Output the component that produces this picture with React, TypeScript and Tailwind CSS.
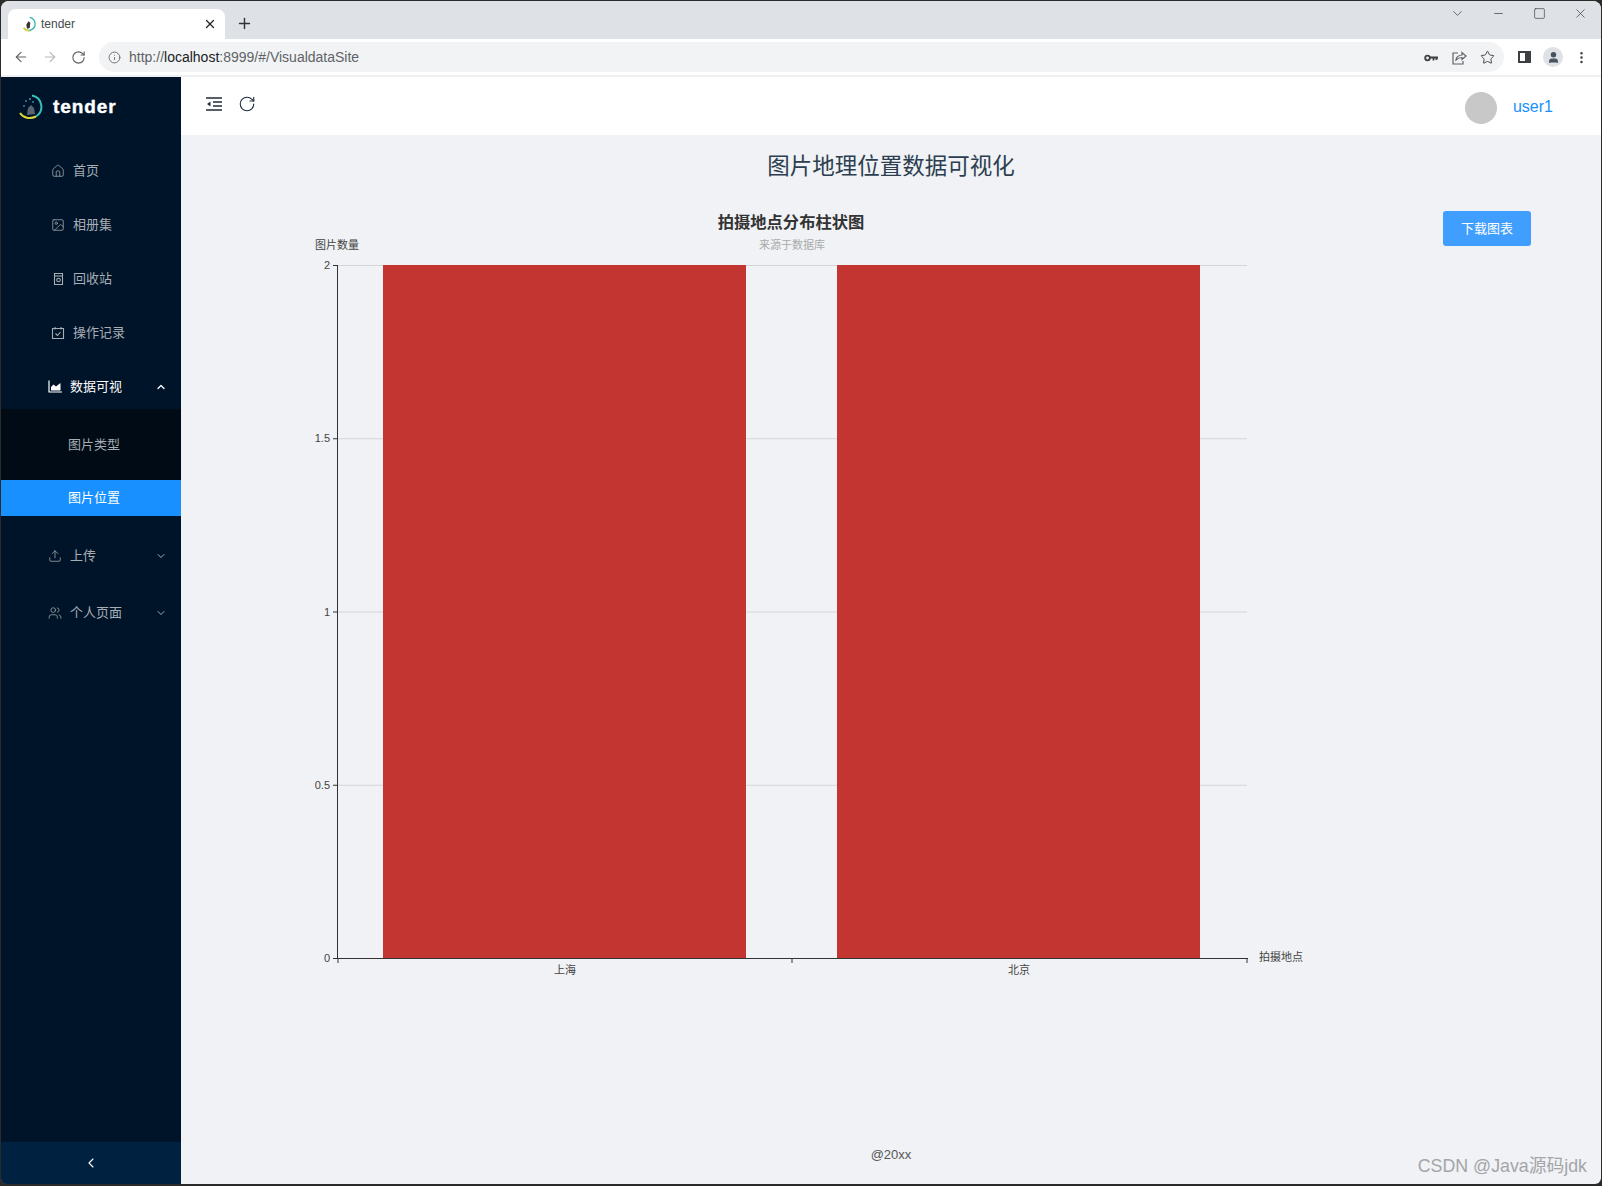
import React from 'react';
import {
  ArrowLeft, ArrowRight, RotateCw, Info, Star, Plus, X, ChevronDown, ChevronUp, ChevronLeft,
  Minus, Square, Home, Image as ImageIcon, Upload, Users, EllipsisVertical, User,
} from 'lucide-react';

const font = '[font-family:"Liberation_Sans","Noto_Sans_CJK_SC",sans-serif]';

const TabLogo = ({ size = 16 }: { size?: number }) => (
  <svg width={size} height={size} viewBox="0 0 24 24" fill="none">
    <path d="M13 2a10 10 0 0 1 2 19 10 10 0 0 1-11-3" stroke="#2fb7b0" strokeWidth="2" />
    <path d="M4 18a10 10 0 0 0 9 4" stroke="#e6d53c" strokeWidth="2.4" />
    <path d="M11 8l3 2-1 8-4 1-1-6z" fill="#333" />
  </svg>
);

const SidebarLogo = () => (
  <svg width="24" height="26" viewBox="0 0 24 26" fill="none">
    <path d="M13 1.500a11.500 11.500 0 0 1 4 21" stroke="#35c2c0" strokeWidth="2" />
    <path d="M1 19c3 5 10 6.500 16 3.500" stroke="#d8d43a" strokeWidth="2" />
    <path d="M9 14l3-3 3 3 1 6-8 1z" fill="#5a6470" />
    <circle cx="7" cy="7" r="1" fill="#3d7fa8" />
    <circle cx="11" cy="5" r="1" fill="#5c8fb0" />
    <circle cx="5" cy="12" r="1" fill="#3d7fa8" />
    <circle cx="14" cy="8" r="1" fill="#3d7fa8" />
  </svg>
);

const ShareIcon = () => (
  <svg width="16" height="16" viewBox="0 0 16 16" fill="none" stroke="#5f6368" strokeWidth="1.2">
    <path d="M7 3H2v11h10v-3" />
    <path d="M5 10c0-3 3-5 6-5V2.500L15 6l-4 3.500V7.500C8.500 7.500 6.500 8.500 5 10z" />
  </svg>
);

const KeyIcon = () => (
  <svg width="14" height="10" viewBox="0 0 14 10" fill="none" stroke="#3c4043">
    <circle cx="3.500" cy="5" r="2.300" strokeWidth="1.800" />
    <path d="M6 4.500h8M9.500 4.500v3M12.500 4.500v2.500" strokeWidth="1.800" />
  </svg>
);

const BinIcon = () => (
  <svg width="13" height="14" viewBox="0 0 13 14" fill="none" stroke="currentColor" strokeWidth="1.1">
    <path d="M2.500 1.500h8v11h-8z" />
    <path d="M2 4h9" />
    <circle cx="6.500" cy="8" r="1.800" />
  </svg>
);

const RecordIcon = () => (
  <svg width="14" height="14" viewBox="0 0 14 14" fill="none" stroke="currentColor" strokeWidth="1.1">
    <path d="M1.500 2.500h11v10h-11z" />
    <path d="M4 1v2.500M10 1v2.500" />
    <path d="M4.500 7.500l2 2 3-3.500" />
  </svg>
);

const AreaIcon = () => (
  <svg width="14" height="13" viewBox="0 0 14 13" fill="none">
    <path d="M1 .500v11.500h13" stroke="currentColor" strokeWidth="1.200" />
    <path d="M3 10.500V7l2.500-2.500L8 6.500 12.500 3v7.500z" fill="currentColor" />
  </svg>
);

const OutdentIcon = () => (
  <svg width="16" height="14" viewBox="0 0 16 14" fill="none" stroke="#1f2d3d" strokeWidth="1.3">
    <path d="M0 1h16M7 5h9M7 9h9M0 13h16" />
    <path d="M4.500 4.500L1 7l3.500 2.500z" fill="#1f2d3d" stroke="none" />
  </svg>
);

type Item = { label: string; icon: React.ReactNode; chevron?: boolean };

const topItems: Item[] = [
  { label: '首页', icon: <Home size={14} strokeWidth={1.3} /> },
  { label: '相册集', icon: <ImageIcon size={14} strokeWidth={1.3} /> },
  { label: '回收站', icon: <BinIcon /> },
  { label: '操作记录', icon: <RecordIcon /> },
];

const MenuRow = ({ label, icon }: Item) => (
  <div className="flex h-[54px] items-center pl-[50px] text-[13px] text-[#a6adb4]">
    <span className="flex w-[14px] justify-center">{icon}</span>
    <span className="ml-2">{label}</span>
  </div>
);

const SubMenuRow = ({ label, icon }: { label: string; icon: React.ReactNode }) => (
  <div className="flex h-[57px] items-center pl-[47px] pr-[14px] text-[13px] text-[#a6adb4]">
    <span className="flex w-[14px] justify-center">{icon}</span>
    <span className="ml-2 flex-1">{label}</span>
    <ChevronDown size={12} strokeWidth={2} />
  </div>
);

const Sidebar = () => (
  <aside className="flex w-[180px] shrink-0 flex-col bg-[#001429]">
    <div className="flex h-[67px] items-center pb-[7px] pl-[18px]">
      <SidebarLogo />
      <span className="ml-[10px] text-[19px] font-bold tracking-[0.9px] text-white [-webkit-text-stroke:0.4px_white]">tender</span>
    </div>
    {topItems.map((it) => (
      <MenuRow key={it.label} {...it} />
    ))}
    <div className="flex h-[49px] items-center pl-[47px] pr-[14px] pt-[4px] text-[13px] text-white">
      <span className="flex w-[14px] justify-center"><AreaIcon /></span>
      <span className="ml-2 flex-1">数据可视</span>
      <ChevronUp size={12} strokeWidth={2.5} />
    </div>
    <div className="flex h-[71px] items-center bg-[#000b16] pl-[67px] text-[13px] text-[#a6adb4]">图片类型</div>
    <div className="flex h-[36px] items-center bg-[#1890ff] pl-[67px] text-[13px] text-white">图片位置</div>
    <div className="h-[11px]" />
    <SubMenuRow label="上传" icon={<Upload size={14} strokeWidth={1.3} />} />
    <SubMenuRow label="个人页面" icon={<Users size={14} strokeWidth={1.3} />} />
    <div className="flex-1" />
    <div className="flex h-[42px] items-center justify-center bg-[#002140] text-white">
      <ChevronLeft size={16} strokeWidth={1.6} />
    </div>
  </aside>
);

const BrowserChrome = () => (
  <div className="shrink-0">
    <div className="flex h-[38px] items-end bg-[#dee1e6]">
      <div className="ml-[7px] flex h-[30px] w-[217px] items-center rounded-t-[8px] bg-white pb-px pl-[13px] pr-[8px]">
        <TabLogo />
        <span className="ml-[4px] flex-1 text-[12px] text-[#45494e]">tender</span>
        <X size={14} strokeWidth={2.2} className="text-[#222]" />
      </div>
      <div className="ml-[11px] flex h-[30px] items-center pb-[2px]">
        <Plus size={17} strokeWidth={2} className="text-[#333]" />
      </div>
      <div className="flex-1" />
      <div className="flex h-[38px] items-start pt-[5px] text-[#444]">
        <ChevronDown size={15} strokeWidth={1.2} className="mr-[27px]" />
        <Minus size={13} strokeWidth={1.4} className="mr-[28px] mt-[1px]" />
        <Square size={13} strokeWidth={1.3} className="mr-[27px] mt-[1px]" />
        <X size={15} strokeWidth={1.2} className="mr-[13px]" />
      </div>
    </div>
    <div className="flex h-[36px] items-center bg-white text-[#5f6368]">
      <ArrowLeft size={16} strokeWidth={1.7} className="ml-[12px]" />
      <ArrowRight size={16} strokeWidth={1.7} className="ml-[13px] text-[#b4b7bb]" />
      <RotateCw size={15} strokeWidth={1.8} className="ml-[13px]" />
      <div className="ml-[13px] flex h-[30px] w-[1405px] items-center rounded-full bg-[#f1f3f4] pl-[9px] pr-[9px] pt-px">
        <Info size={13} strokeWidth={1.6} />
        <span className="ml-[8px] flex-1 text-[14px] text-[#5f6368]">
          http://<span className="text-[#202124]">localhost</span>:8999/#/VisualdataSite
        </span>
        <span className="mr-[13px]"><KeyIcon /></span>
        <ShareIcon />
        <Star size={15} strokeWidth={1.5} className="ml-[13px] text-[#3c4043]" />
      </div>
      <div className="ml-[14px] h-[12px] w-[13px] border-2 border-[#3c4043] bg-[linear-gradient(90deg,white_50%,#3c4043_50%)]" />
      <div className="ml-[12px] flex h-[20px] w-[20px] items-center justify-center rounded-full bg-[#dfe1e5]">
        <User size={13} fill="#46505f" className="text-[#46505f]" />
      </div>
      <EllipsisVertical size={15} strokeWidth={2} className="ml-[11px] text-[#3c4043]" />
    </div>
    <div className="h-[2px] bg-[#eef0f2]" />
  </div>
);

const Header = () => (
  <div className="flex h-[58px] shrink-0 items-center bg-white pb-[5px] pl-[25px] pr-[48px]">
    <OutdentIcon />
    <RotateCw size={18} strokeWidth={1.5} className="ml-[16px] text-[#1f2d3d]" />
    <div className="flex-1" />
    <div className="mt-[9px] h-[32px] w-[32px] rounded-full bg-[#c8c8c8]" />
    <span className="ml-[16px] mt-[6px] text-[16px] text-[#1890ff]">user1</span>
  </div>
);

// 坐标系: svg 左上角对应页面 (300, 205)
const BarChart = () => {
  const x0 = 38;
  const x1 = 947;
  const top = 60;
  const bottom = 753;
  const ticks = ['2', '1.5', '1', '0.5', '0'];
  return (
    <svg width="1020" height="785" viewBox="0 0 1020 785" className="shrink-0">
      {ticks.slice(0, 4).map((_, i) => {
        const y = top + (i * (bottom - top)) / 4;
        return <line key={i} x1={x0} x2={x1} y1={y + 0.5} y2={y + 0.5} stroke="#d4d5d8" />;
      })}
      <rect x="83" y={top} width="363" height={bottom - top} fill="#c23531" />
      <rect x="537" y={top} width="363" height={bottom - top} fill="#c23531" />
      <line x1={x0 - 0.5} x2={x0 - 0.5} y1={top} y2={bottom + 1} stroke="#333" />
      <line x1={x0 - 5} x2={x1 + 1} y1={bottom + 0.5} y2={bottom + 0.5} stroke="#333" />
      {ticks.map((t, i) => {
        const y = top + (i * (bottom - top)) / 4;
        return (
          <g key={t}>
            <line x1={x0 - 5} x2={x0} y1={y + 0.5} y2={y + 0.5} stroke="#333" />
            <text x={x0 - 8} y={y + 4} textAnchor="end" fontSize="11" fill="#444">{t}</text>
          </g>
        );
      })}
      <line x1="38" x2="38" y1={bottom} y2={bottom + 5} stroke="#333" />
      <line x1="492" x2="492" y1={bottom} y2={bottom + 5} stroke="#333" />
      <line x1="947" x2="947" y1={bottom} y2={bottom + 5} stroke="#333" />
      <text x="265" y={bottom + 16} textAnchor="middle" fontSize="11" fill="#444">上海</text>
      <text x="719" y={bottom + 16} textAnchor="middle" fontSize="11" fill="#444">北京</text>
      <text x="959" y={bottom + 3} fontSize="11" fill="#444">拍摄地点</text>
      <text x="37" y="44" textAnchor="middle" fontSize="11" fill="#444">图片数量</text>
      <text x="491" y="23" textAnchor="middle" fontSize="16.300" fontWeight="700" fill="#333">拍摄地点分布柱状图</text>
      <text x="492" y="44" textAnchor="middle" fontSize="11" fill="#aaa">来源于数据库</text>
    </svg>
  );
};

export default function App() {
  return (
    <div className={`relative h-[1186px] w-[1602px] overflow-hidden bg-[#2b2b2b] pb-[2px] pl-px pr-px pt-px ${font}`}>
      <div className="flex h-full flex-col overflow-hidden rounded-t-[8px] rounded-b-[6px] bg-[#f0f2f5]">
        <BrowserChrome />
        <div className="flex min-h-0 flex-1">
          <Sidebar />
          <main className="flex min-w-0 flex-1 flex-col">
            <Header />
            <h1 className="mt-[16px] text-center text-[22.500px] leading-[32px] text-[#2c3e50]">图片地理位置数据可视化</h1>
            <div className="mt-[22px] flex items-start pl-[119px]">
              <BarChart />
              <button className="ml-[123px] mt-[6px] h-[35px] w-[88px] rounded-[3px] bg-[#409eff] text-[13px] text-white">下载图表</button>
            </div>
            <div className="flex-1" />
            <footer className="pb-[21px] text-center text-[13px] leading-[16px] text-[#555]">@20xx</footer>
          </main>
        </div>
      </div>
      <span className="absolute bottom-[9px] right-[15px] text-[17.800px] leading-[22px] text-[#a3a5a8]">CSDN @Java源码jdk</span>
    </div>
  );
}
